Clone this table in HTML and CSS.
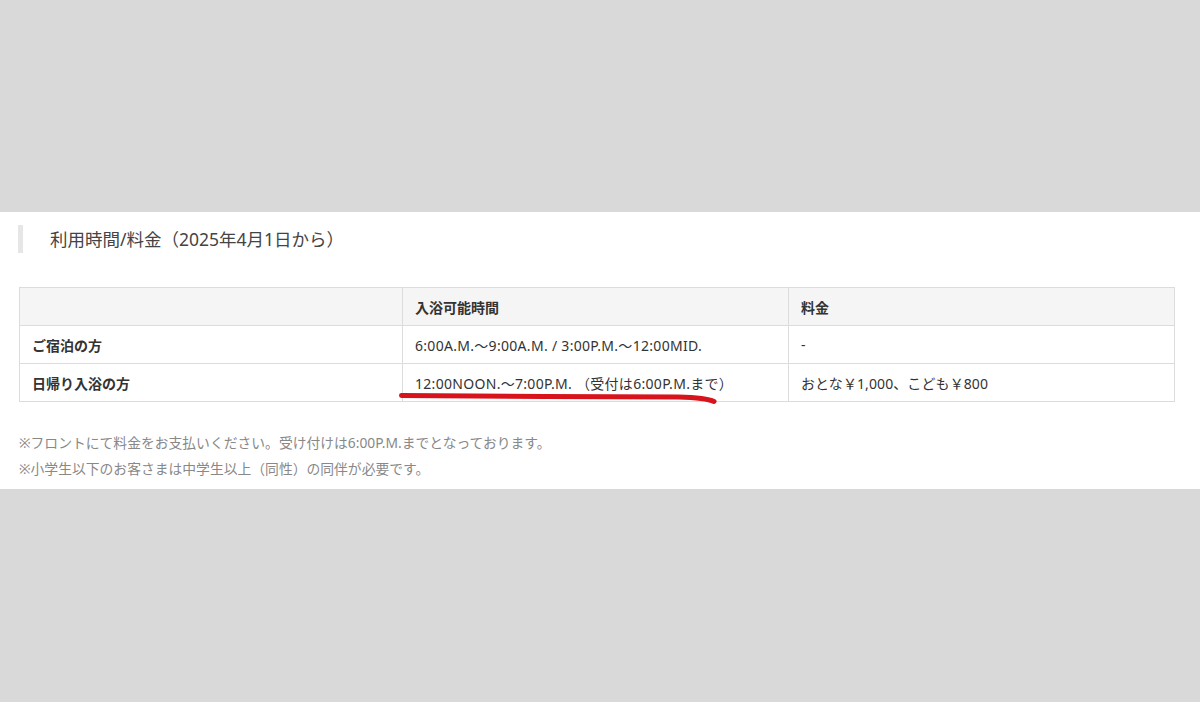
FILE: index.html
```html
<!DOCTYPE html>
<html lang="ja">
<head>
<meta charset="utf-8">
<link rel="stylesheet" href="styles.css">
</head>
<body>
<div class="top"></div>
<div class="panel">
  <h2 class="heading">利用時間/料金（2025年4月1日から）</h2>
  <div class="table-wrap">
    <table class="fees">
      <colgroup><col class="c1"><col class="c2"><col class="c3"></colgroup>
      <thead>
        <tr><th></th><th>入浴可能時間</th><th>料金</th></tr>
      </thead>
      <tbody>
        <tr><th>ご宿泊の方</th><td>6:00A.M.～9:00A.M. / 3:00P.M.～12:00MID.</td><td>-</td></tr>
        <tr><th>日帰り入浴の方</th><td>12:00NOON.～7:00P.M. （受付は6:00P.M.まで）</td><td class="price">おとな￥1,000、こども￥800</td></tr>
      </tbody>
    </table>
    <svg class="mark" width="330" height="16" viewBox="0 0 330 16">
      <path d="M3.5 4.5 C 80 5.5, 200 5.5, 280 6 C 300 6.5, 310 7.5, 316 10.5" fill="none" stroke="#d7141c" stroke-width="5" stroke-linecap="round"/>
    </svg>
  </div>
  <div class="notes">
    <p>※フロントにて料金をお支払いください。受け付けは6:00P.M.までとなっております。</p>
    <p>※小学生以下のお客さまは中学生以上（同性）の同伴が必要です。</p>
  </div>
</div>
</body>
</html>
```

FILE: styles.css
```css
html, body {
  margin: 0;
  padding: 0;
  background: #d9d9d9;
  font-family: "Noto Sans", "Noto Sans CJK JP", sans-serif;
}
.top {
  height: 212px;
}
.panel {
  background: #fff;
  padding: 13px 0 7px 0;
}
.heading {
  margin: 0 0 0 18px;
  border-left: 5px solid #e6e6e6;
  padding-left: 27px;
  height: 28px;
  line-height: 28px;
  font-size: 17.5px;
  font-weight: normal;
  color: #444;
}
.table-wrap {
  position: relative;
  margin: 34px 0 0 19px;
  width: 1155px;
}
.fees {
  width: 1155px;
  border-collapse: collapse;
  table-layout: fixed;
  font-size: 14px;
  color: #333;
}
.c1 { width: 383px; }
.c2 { width: 386px; }
.c3 { width: 386px; }
.fees th, .fees td {
  border: 1px solid #dcdcdc;
  height: 38px;
  padding: 0 12px;
  text-align: left;
  box-sizing: border-box;
}
.fees th {
  font-weight: bold;
}
.fees td {
  font-weight: normal;
  letter-spacing: 0.3px;
}
.fees td.price {
  letter-spacing: 0.1px;
}
.fees thead th {
  background: #f5f5f5;
}
.mark {
  position: absolute;
  left: 379px;
  top: 104px;
}
.notes {
  margin: 28px 0 0 19px;
  font-size: 13.8px;
  color: #888;
}
.notes p {
  margin: 0;
  line-height: 26px;
}
```
